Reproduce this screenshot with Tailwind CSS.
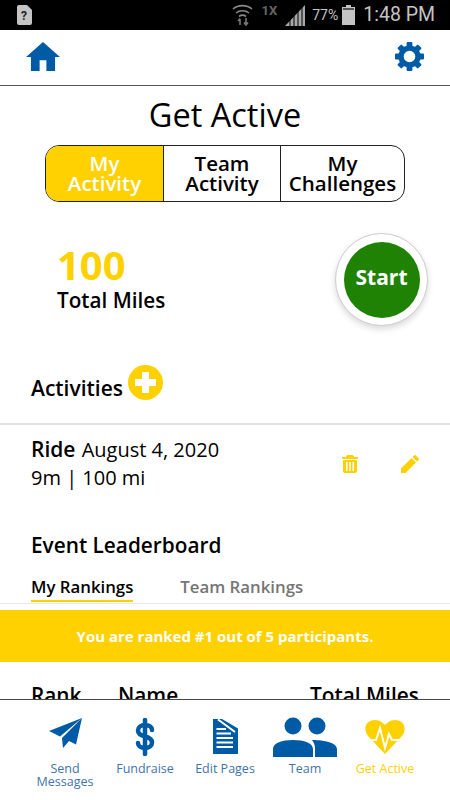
<!DOCTYPE html>
<html lang="en">
<head>
    <meta charset="UTF-8">
    <meta name="viewport" content="width=device-width, initial-scale=1.0">
    <title>Get Active</title>
    <script src="https://cdn.jsdelivr.net/npm/@tailwindcss/browser@4"></script>
</head>
<body class="flex flex-col h-screen overflow-hidden bg-white font-['Open_Sans',sans-serif] text-black">

    <!-- status bar -->
    <div class="h-[30px] shrink-0 bg-black flex items-center pl-[17px] pr-[15px] text-[#c4c4c4] font-['Roboto',sans-serif]">
        <svg class="w-[15px] h-[20px]" viewBox="0 0 15 20"><path fill="#c4c4c4" d="M2 0h8l5 5v13a2 2 0 0 1-2 2H2a2 2 0 0 1-2-2V2a2 2 0 0 1 2-2z"/><text x="7" y="15" font-size="12" font-weight="700" text-anchor="middle" fill="#222" font-family="Roboto">?</text></svg>
        <svg class="ml-auto w-[21px] h-[22px]" viewBox="0 0 21 22" fill="none" stroke="#8a8a8a" stroke-width="1.6"><path d="M1 5c5-4.500 14-4.500 19 0M4 9c3.500-3 9.500-3 13 0M7 12.500c2-1.500 5-1.500 7 0"/><path stroke="#777" d="M8 21v-6M6 17l2-2.500M14 14v7M12 18.500l2 2.500 2-2.500"/></svg>
        <span class="ml-[9px] text-[13px] font-bold text-[#666] leading-none mb-[9px]">1X</span>
        <svg class="ml-[8px] w-[21px] h-[21px]" viewBox="0 0 21 21"><path fill="#a8a8a8" d="M0 21 20 0v21z"/><path stroke="#000" stroke-width="1" d="M5 21v-7M9 21v-11M13 21v-15M17 21v-19"/></svg>
        <span class="ml-[6px] text-[14px] leading-none">77%</span>
        <svg class="ml-[4px] w-[13px] h-[20px]" viewBox="0 0 13 20"><path fill="#c4c4c4" d="M4 0h5v2h4v18H0V2h4z"/><path fill="#555" d="M1 3h11v2H1z"/></svg>
        <span class="ml-[8px] text-[19.500px] leading-none">1:48 PM</span>
    </div>

    <!-- header -->
    <header class="h-[56px] shrink-0 border-b border-[#555] flex items-center justify-between pl-[26px] pr-[26px] pb-[2px]">
        <svg class="w-[34px] h-[29px]" viewBox="0 0 35 30"><path fill="#005ba6" d="M17.500 0 35 15.500h-5V30H21V19h-7v11H5V15.500H0z"/></svg>
        <svg class="w-[29px] h-[29px]" viewBox="-15 -15 30 30" fill="#005ba6">
            <path fill-rule="evenodd" d="M0-11.500a11.500 11.500 0 1 0 0 23 11.500 11.500 0 0 0 0-23zM0-6a6 6 0 1 1 0 12A6 6 0 0 1 0-6z"/>
            <rect x="-3" y="-15" width="6" height="6" rx="1"/>
            <rect x="-3" y="-15" width="6" height="6" rx="1" transform="rotate(45)"/>
            <rect x="-3" y="-15" width="6" height="6" rx="1" transform="rotate(90)"/>
            <rect x="-3" y="-15" width="6" height="6" rx="1" transform="rotate(135)"/>
            <rect x="-3" y="-15" width="6" height="6" rx="1" transform="rotate(180)"/>
            <rect x="-3" y="-15" width="6" height="6" rx="1" transform="rotate(225)"/>
            <rect x="-3" y="-15" width="6" height="6" rx="1" transform="rotate(270)"/>
            <rect x="-3" y="-15" width="6" height="6" rx="1" transform="rotate(315)"/>
        </svg>
    </header>

    <main class="flex-1 min-h-0 overflow-hidden">
        <h1 class="mt-[9px] text-center text-[32.500px] leading-[40px] font-medium">Get Active</h1>

        <!-- tabs -->
        <div class="mt-[10px] mx-[45px] h-[57px] flex border border-[#222] rounded-[14px] overflow-hidden text-[20.500px] leading-[20px] font-semibold text-center">
            <div class="w-[117px] bg-[#ffd100] text-white flex items-center justify-center pb-[1px]">My<br>Activity</div>
            <div class="w-[117px] border-l border-[#222] flex items-center justify-center pb-[1px]">Team<br>Activity</div>
            <div class="flex-1 border-l border-[#222] flex items-center justify-center pb-[1px]">My<br>Challenges</div>
        </div>

        <!-- total + start -->
        <div class="mt-[31px] h-[93px] flex items-center justify-between pl-[57px] pr-[22px]">
            <div class="mb-[5px]">
                <div class="text-[40px] leading-[45px] font-bold text-[#ffd100]">100</div>
                <div class="text-[20.700px] leading-[26px] font-semibold">Total Miles</div>
            </div>
            <div class="w-[93px] h-[93px] rounded-full bg-white border border-[#ccc] shadow-[0_3px_6px_rgba(0,0,0,0.15)] flex items-center justify-center">
                <div class="w-[76px] h-[76px] rounded-full bg-[#1f8205] text-white text-[21px] font-bold flex items-center justify-center pb-[3px]">Start</div>
            </div>
        </div>

        <!-- activities -->
        <div class="mt-[39px] pl-[31px] flex items-start border-b-2 border-[#e2e2e2] h-[60px]">
            <span class="mt-[10px] text-[21px] leading-[27px] font-semibold">Activities</span>
            <svg class="ml-[5px] w-[35px] h-[35px]" viewBox="0 0 35 35"><circle cx="17.500" cy="17.500" r="17.500" fill="#ffd100"/><path fill="#fff" d="M14 7h7v7h7v7h-7v7h-7v-7H7v-7h7z"/></svg>
        </div>

        <div class="pl-[31px] pr-[31px] mt-[10px] flex items-center justify-between">
            <div class="text-[20px] leading-[28px]">
                <div><span class="font-semibold text-[21px]">Ride</span> <span class="ml-[1px]">August 4, 2020</span></div>
                <div>9m | 100 mi</div>
            </div>
            <div class="flex items-center gap-[43px]">
                <svg class="w-[16px] h-[18px]" viewBox="0 0 16 18"><path fill="#ffd100" d="M5 0h6l1 2h4v2H0V2h4zM1 5h14v11a2 2 0 0 1-2 2H3a2 2 0 0 1-2-2zm3 2v9h1.500V7zm3.250 0v9h1.500V7zm3.250 0v9H12V7z"/></svg>
                <svg class="w-[18px] h-[18px]" viewBox="0 0 18 18"><path fill="#ffd100" d="M0 18v-4.500L10.500 3 15 7.500 4.500 18zM11.500 2l1.500-1.500a1.500 1.500 0 0 1 2 0l2.500 2.500a1.500 1.500 0 0 1 0 2L16 6.500z"/></svg>
            </div>
        </div>

        <!-- leaderboard -->
        <h2 class="mt-[40px] pl-[31px] text-[20.800px] leading-[27px] font-semibold">Event Leaderboard</h2>
        <div class="mt-[17px] pl-[31px] flex gap-[47px] border-b border-[#e8e8e8] h-[28px] text-[16.800px] leading-[22px] font-semibold">
            <div class="h-[26px] border-b-2 border-[#ffd100]">My Rankings</div>
            <div class="text-[#757575]">Team Rankings</div>
        </div>
        <div class="mt-[6px] h-[52px] bg-[#ffd100] text-white text-[15px] font-bold flex items-center justify-center">You are ranked #1 out of 5 participants.</div>
        <div class="mt-[20px] pl-[31px] flex text-[20.800px] leading-[27px] font-semibold">
            <div class="w-[87px]">Rank</div>
            <div class="w-[192px]">Name</div>
            <div>Total Miles</div>
        </div>
    </main>

    <!-- bottom nav -->
    <nav class="h-[101px] shrink-0 border-t border-[#444] bg-white px-[25px] pt-[17px] grid grid-cols-5 text-[12.500px] leading-[13px] text-[#3f74ab] text-center">
        <div class="flex flex-col items-center">
            <div class="h-[45px]"><svg class="w-[33px] h-[30px] mt-[1px]" viewBox="0 0 33 30"><path fill="#005ba6" d="M33 0 0 13l11 5.500zM33 0 13 20l1 10 6-7 7 3.500z"/></svg></div>
            <div>Send<br>Messages</div>
        </div>
        <div class="flex flex-col items-center">
            <div class="h-[45px]"><svg class="w-[20px] h-[38px] mt-[1px]" viewBox="0 0 20 38" fill="none"><path stroke="#005ba6" stroke-width="4.500" stroke-linecap="round" d="M17 12c0-3-3-5-7-5s-7 2-7 5.500 3 5 7 6 7 2.500 7 6-3 5.500-7 5.500-7-2-7-5M10 2v34"/></svg></div>
            <div>Fundraise</div>
        </div>
        <div class="flex flex-col items-center">
            <div class="h-[45px]"><svg class="w-[25px] h-[35px] mt-[2px]" viewBox="0 0 25 35"><path fill="#005ba6" d="M0 0H9L25 9.500V35H0z"/><path stroke="#fff" stroke-width="2" fill="none" d="M5 .5 22 13M3.500 10H13M3.500 14.500H18M3.500 19H20M3.500 23.500H20M3.500 28H20"/></svg></div>
            <div>Edit Pages</div>
        </div>
        <div class="flex flex-col items-center">
            <div class="h-[45px]"><svg class="w-[64px] h-[40px]" viewBox="0 0 64 40"><circle cx="20" cy="9" r="8.500" fill="#005ba6"/><circle cx="44" cy="9" r="8.500" fill="#005ba6"/><path fill="#005ba6" d="M0 40V32C0 26 9 23 20 23s20 3 20 9v8zM42 40V31c0-3-1-5-3-8 13 0 25 3 25 9v8z"/></svg></div>
            <div>Team</div>
        </div>
        <div class="flex flex-col items-center text-[#ffd100]">
            <div class="h-[45px]"><svg class="w-[40px] h-[34px] mt-[3px]" viewBox="0 0 40 34"><path fill="#ffd100" d="M20 34 3 16C-2 10 0 0 10 0c5 0 8 3 10 5 2-2 5-5 10-5 10 0 12 10 7 16z"/><path fill="none" stroke="#fff" stroke-width="2" d="M3 20H11L15 8 20 28 24 14 27 20H37"/></svg></div>
            <div>Get Active</div>
        </div>
    </nav>
</body>
</html>
